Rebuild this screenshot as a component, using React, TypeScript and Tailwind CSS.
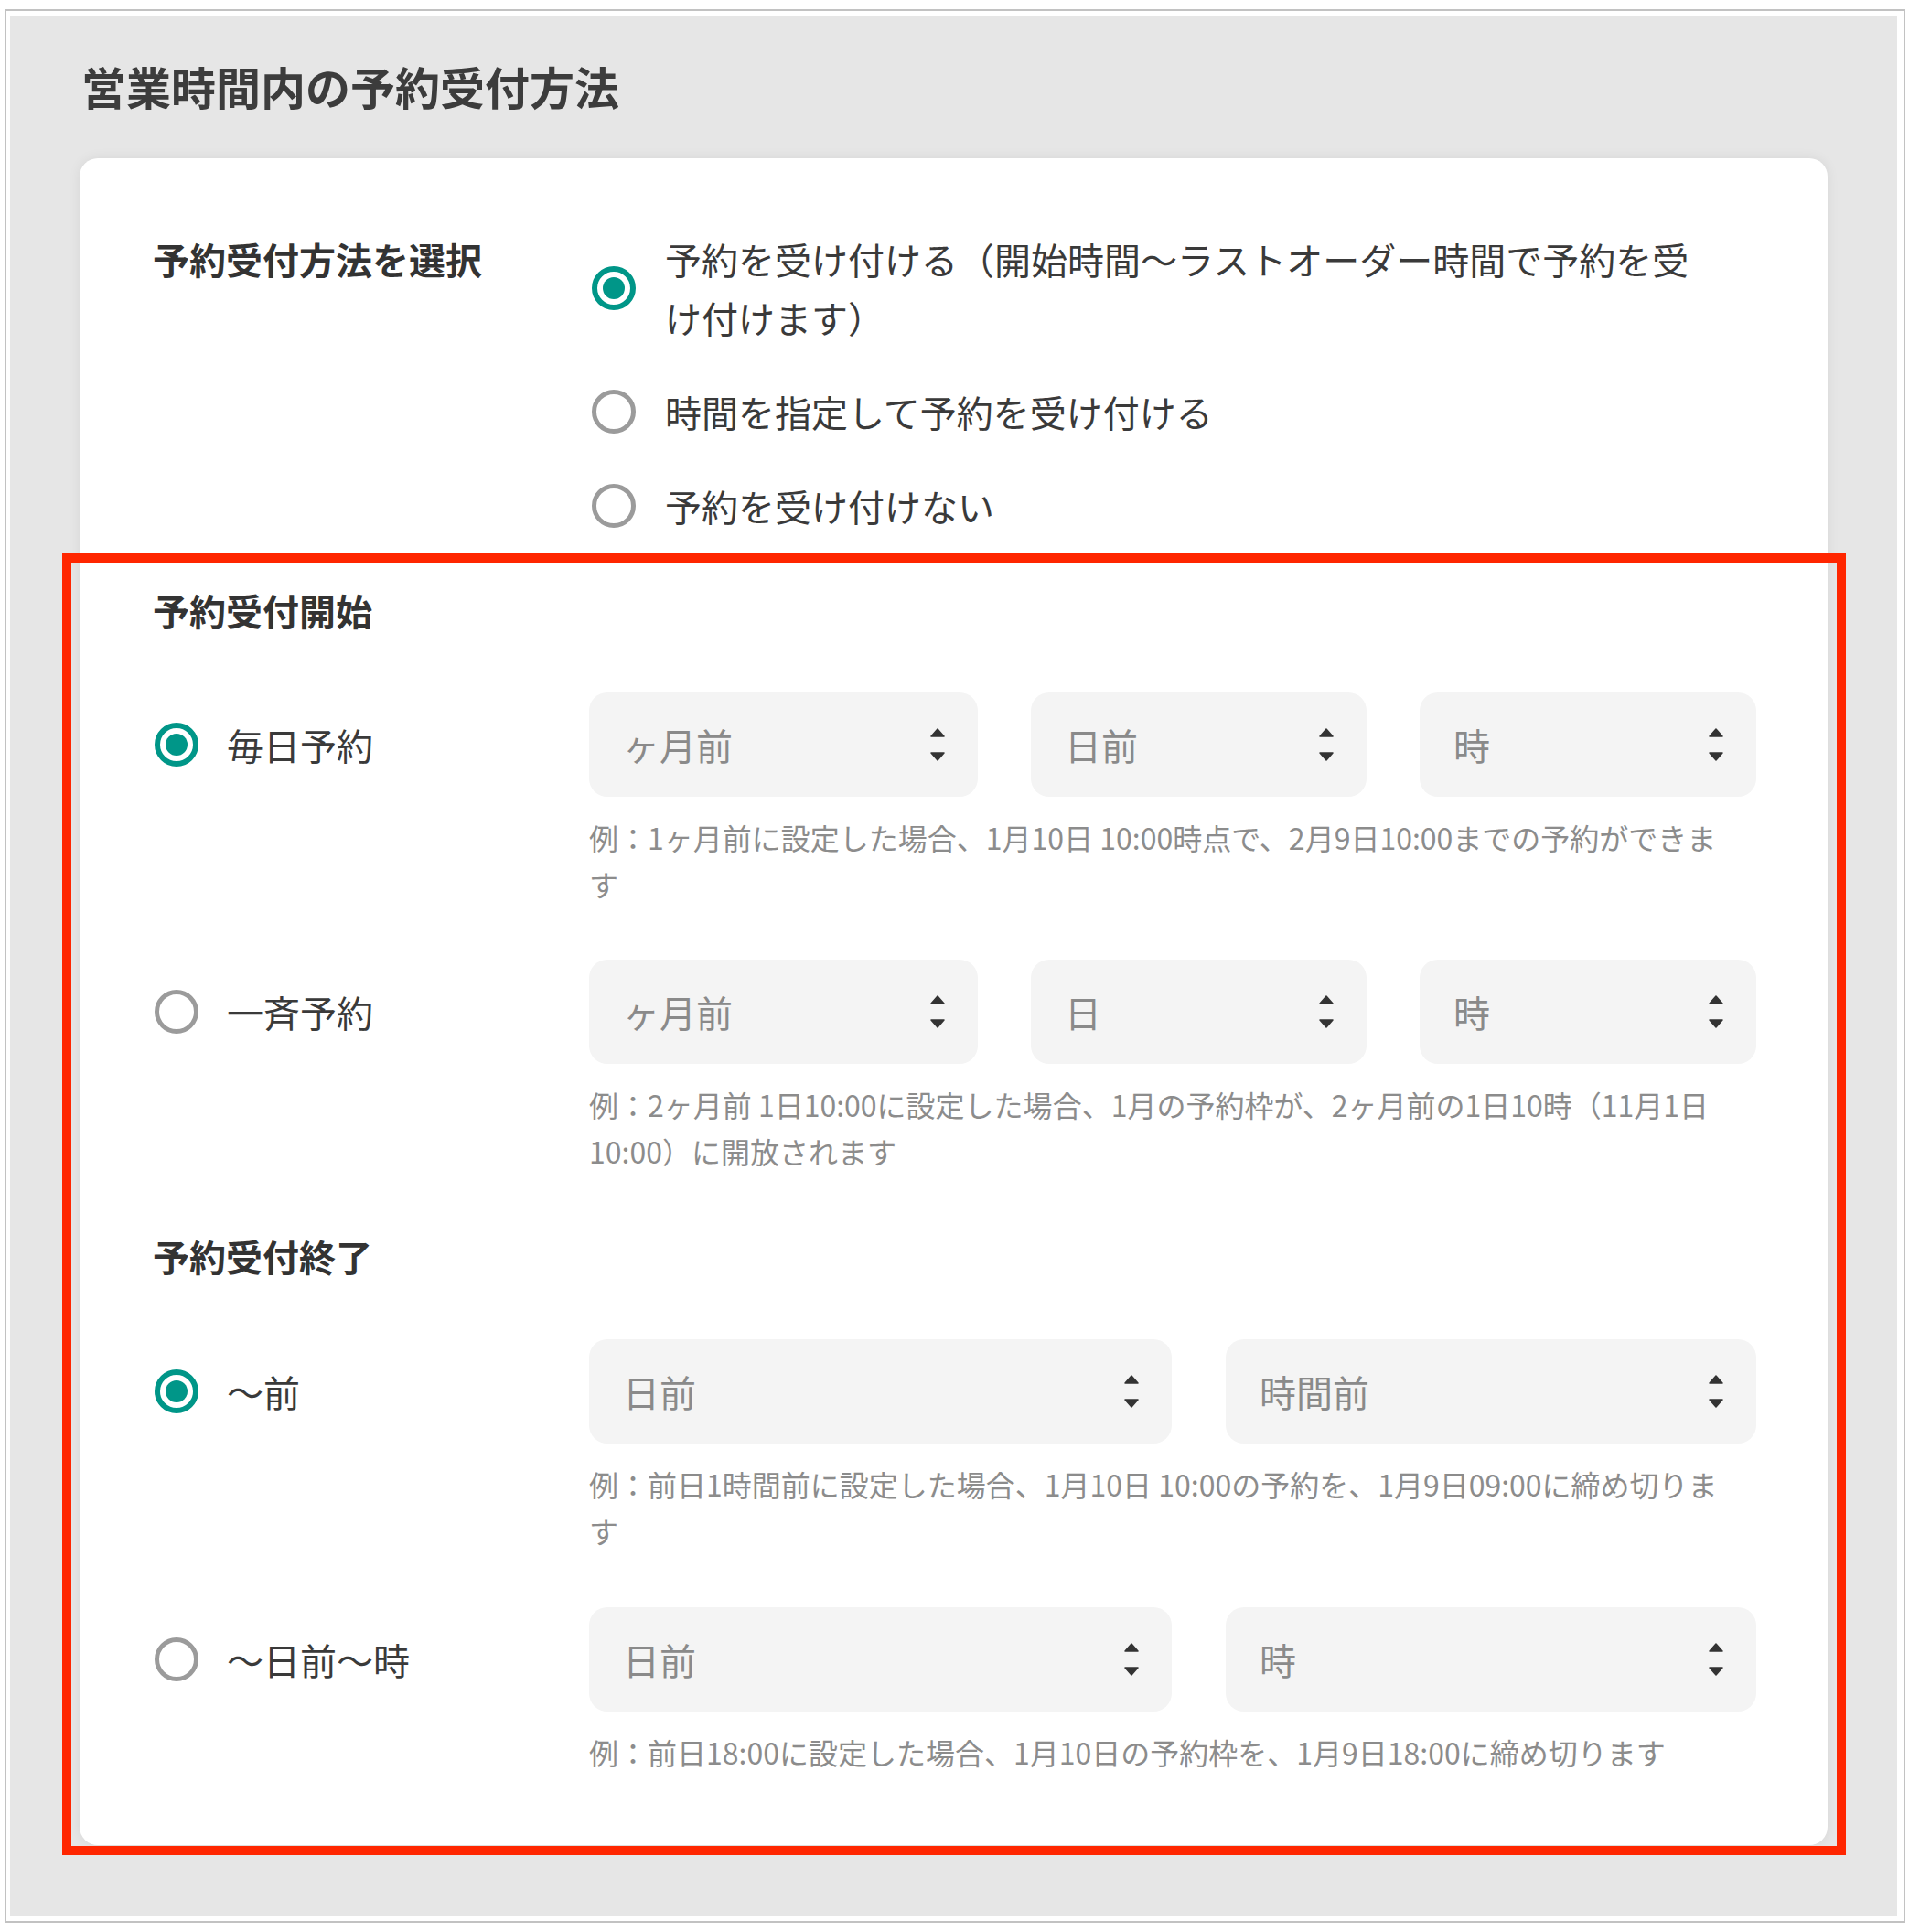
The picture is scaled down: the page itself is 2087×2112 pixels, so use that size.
import React from "react";

function Radio({ checked }: { checked?: boolean }) {
  return checked ? (
    <span className="flex h-[48px] w-[48px] shrink-0 items-center justify-center rounded-full border-[6px] border-[#009688]">
      <span className="h-[24px] w-[24px] rounded-full bg-[#009688]" />
    </span>
  ) : (
    <span className="h-[48px] w-[48px] shrink-0 rounded-full border-[5px] border-[#9b9b9b]" />
  );
}

function Arrows() {
  return (
    <svg width="18" height="38" viewBox="0 0 18 38" className="shrink-0">
      <path d="M9 2 L16 10 H2 Z" fill="#333" stroke="#333" strokeWidth="1.5" strokeLinejoin="round" />
      <path d="M2 28 H16 L9 36 Z" fill="#333" stroke="#333" strokeWidth="1.5" strokeLinejoin="round" />
    </svg>
  );
}

function Select({ label, className }: { label: string; className: string }) {
  return (
    <div
      className={
        "flex h-[114px] items-center justify-between rounded-[20px] bg-[#f4f4f4] pl-[37px] pr-[35px] " +
        className
      }
    >
      <span className="text-[40px] leading-[64px] text-[#8a8a8a]">{label}</span>
      <Arrows />
    </div>
  );
}

function RadioLabel({ checked, label }: { checked?: boolean; label: string }) {
  return (
    <div className="flex w-[477px] shrink-0 items-center gap-[31px] pl-[2px]">
      <Radio checked={checked} />
      <span className="text-[40px] leading-[64px] text-[#3a3a3a]">{label}</span>
    </div>
  );
}

function Help({ children }: { children: React.ReactNode }) {
  return (
    <p className="ml-[477px] mt-[19px] whitespace-nowrap text-[32px] leading-[51px] text-[#8c8c8c]">
      {children}
    </p>
  );
}

export default function App() {
  return (
    <div className="relative min-h-[2112px] w-[2087px] bg-white pl-[5px] pt-[10px] font-['Noto_Sans_CJK_JP','Noto_Sans',sans-serif]">
      <div className="h-[2092px] w-[2078px] border-2 border-[#c2c2c2] pb-[5px] pl-[4px] pr-[7px] pt-[5px]">
        <div className="h-full bg-[#e6e6e6] px-[76px] pb-[76px] pt-[43px]">
          <h1 className="mb-[45px] pl-[2px] text-[49px] font-bold leading-[68px] text-[#3c3c3c]">
            営業時間内の予約受付方法
          </h1>

          <div className="rounded-[20px] bg-white pb-[76px] pl-[80px] pr-[78px] pt-[78px] shadow-[0_0_14px_rgba(0,0,0,0.07)]">
            {/* 予約受付方法を選択 */}
            <div className="flex">
              <div className="w-[477px] shrink-0 text-[40px] font-bold leading-[64px] text-[#333]">
                予約受付方法を選択
              </div>
              <div className="flex flex-col gap-[39px]">
                <div className="flex items-center gap-[32px] pl-[3px]">
                  <Radio checked />
                  <span className="max-w-[1140px] text-[40px] leading-[64px] text-[#3a3a3a]">
                    予約を受け付ける（開始時間〜ラストオーダー時間で予約を受け付けます）
                  </span>
                </div>
                <div className="flex items-center gap-[32px] pl-[3px]">
                  <Radio />
                  <span className="text-[40px] leading-[64px] text-[#3a3a3a]">
                    時間を指定して予約を受け付ける
                  </span>
                </div>
                <div className="flex items-center gap-[32px] pl-[3px]">
                  <Radio />
                  <span className="text-[40px] leading-[64px] text-[#3a3a3a]">予約を受け付けない</span>
                </div>
              </div>
            </div>

            {/* 予約受付開始 */}
            <div className="mt-[50px] text-[40px] font-bold leading-[64px] text-[#333]">予約受付開始</div>

            <div className="mt-[58px]">
              <div className="flex items-center">
                <RadioLabel checked label="毎日予約" />
                <div className="flex gap-[58px]">
                  <Select label="ヶ月前" className="w-[425px]" />
                  <Select label="日前" className="w-[367px]" />
                  <Select label="時" className="w-[368px]" />
                </div>
              </div>
              <Help>
                例：1ヶ月前に設定した場合、1月10日 10:00時点で、2月9日10:00までの予約ができま
                <br />す
              </Help>
            </div>

            <div className="mt-[57px]">
              <div className="flex items-center">
                <RadioLabel label="一斉予約" />
                <div className="flex gap-[58px]">
                  <Select label="ヶ月前" className="w-[425px]" />
                  <Select label="日" className="w-[367px]" />
                  <Select label="時" className="w-[368px]" />
                </div>
              </div>
              <Help>
                例：2ヶ月前 1日10:00に設定した場合、1月の予約枠が、2ヶ月前の1日10時（11月1日
                <br />
                10:00）に開放されます
              </Help>
            </div>

            {/* 予約受付終了 */}
            <div className="mt-[57px] text-[40px] font-bold leading-[64px] text-[#333]">予約受付終了</div>

            <div className="mt-[59px]">
              <div className="flex items-center">
                <RadioLabel checked label="〜前" />
                <div className="flex gap-[59px]">
                  <Select label="日前" className="w-[637px]" />
                  <Select label="時間前" className="w-[580px]" />
                </div>
              </div>
              <Help>
                例：前日1時間前に設定した場合、1月10日 10:00の予約を、1月9日09:00に締め切りま
                <br />す
              </Help>
            </div>

            <div className="mt-[58px]">
              <div className="flex items-center">
                <RadioLabel label="〜日前〜時" />
                <div className="flex gap-[59px]">
                  <Select label="日前" className="w-[637px]" />
                  <Select label="時" className="w-[580px]" />
                </div>
              </div>
              <Help>例：前日18:00に設定した場合、1月10日の予約枠を、1月9日18:00に締め切ります</Help>
            </div>
          </div>
        </div>
      </div>

      {/* annotation frame */}
      <div className="pointer-events-none absolute left-[68px] top-[605px] h-[1423px] w-[1950px] border-[10px] border-[#ff2600]" />
    </div>
  );
}
